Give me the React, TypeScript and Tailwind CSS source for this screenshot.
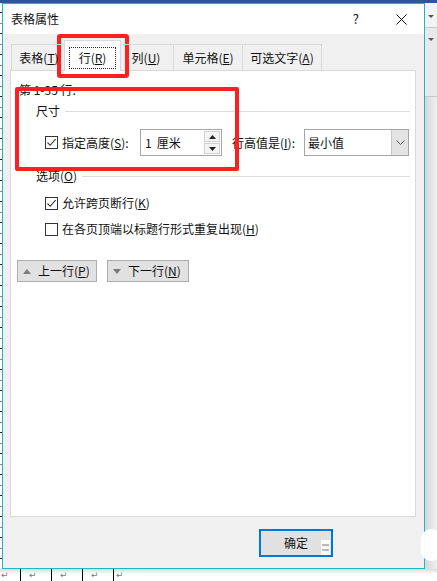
import React from "react";

function Check({ checked }: { checked: boolean }) {
  return (
    <span className="flex h-[13px] w-[13px] shrink-0 items-center justify-center border border-[#333333] bg-white">
      {checked && (
        <svg width="11" height="11" viewBox="0 0 11 11">
          <polyline points="1.5,5.5 4.2,8.3 9.6,2.2" fill="none" stroke="#333333" strokeWidth="1.1" />
        </svg>
      )}
    </span>
  );
}

function Tri({ up }: { up: boolean }) {
  return (
    <svg width="8" height="5" viewBox="0 0 8 5" className="shrink-0">
      {up ? <polygon points="0,5 8,5 4,0" fill="#7a7a7a" /> : <polygon points="0,0 8,0 4,5" fill="#7a7a7a" />}
    </svg>
  );
}

export default function App() {
  return (
    <div className="relative flex h-[581px] w-[437px] flex-col overflow-hidden bg-white font-['Noto_Sans_CJK_SC',sans-serif] text-[12px] leading-[16px] text-[#111111]">
      {/* top ribbon band */}
      <div className="h-[3px] w-full shrink-0 bg-[#2b579a]" />

      <div className="flex h-[566px] shrink-0">
        {/* left doc strip */}
        <div className="w-[2px] shrink-0 bg-[repeating-linear-gradient(to_bottom,#ffffff_0px,#ffffff_9px,#222222_9px,#222222_10px,#ffffff_10px,#ffffff_20px,#888888_20px,#888888_21px)]" />

        {/* dialog */}
        <div className="flex w-[423px] shrink-0 flex-col border border-[#1fb5c7] bg-[#f0f0f0]">
          {/* title bar */}
          <div className="flex h-[30px] shrink-0 items-center bg-white">
            <span className="ml-[8px]">表格属性</span>
            <span className="ml-auto text-[13px]">?</span>
            <svg width="11" height="11" viewBox="0 0 11 11" className="ml-[37px] mr-[17px]">
              <path d="M0.5 0.5 L10.5 10.5 M10.5 0.5 L0.5 10.5" stroke="#111" strokeWidth="1" />
            </svg>
          </div>

          {/* body */}
          <div className="flex flex-1 flex-col pt-[10px]">
            {/* tabs */}
            <div className="relative z-10 ml-[8px] flex h-[26px] items-end">
              <div className="flex h-[26px] w-[55px] items-center justify-center border-l border-t border-[#d9d9d9]">
                表格(<u>T</u>)
              </div>
              <div className="relative z-10 -mx-[2px] mb-[-1px] flex h-[31px] w-[57px] justify-center border-l border-r border-t border-[#d9d9d9] bg-white">
                <span className="mt-[6px] flex h-[22px] w-[47px] items-center justify-center border border-dotted border-[#222]">
                  行(<u>R</u>)
                </span>
              </div>
              <div className="flex h-[26px] w-[54px] items-center justify-center border-t border-[#d9d9d9]">
                列(<u>U</u>)
              </div>
              <div className="flex h-[26px] w-[69px] items-center justify-center border-l border-t border-[#d9d9d9]">
                单元格(<u>E</u>)
              </div>
              <div className="flex h-[26px] w-[80px] items-center justify-center border-l border-r border-t border-[#d9d9d9]">
                可选文字(<u>A</u>)
              </div>
            </div>

            {/* panel */}
            <div className="ml-[7px] flex h-[447px] w-[406px] shrink-0 flex-col border border-[#d9d9d9] bg-white">
              <div className="ml-[8px] mt-[11px]">第 1-35 行:</div>

              <div className="mt-[5px] flex items-center pl-[25px] pr-[5px]">
                <span>尺寸</span>
                <div className="ml-[5px] h-px flex-1 bg-[#dcdcdc]" />
              </div>

              <div className="mt-[10px] flex h-[27px] items-center pl-[34px]">
                <Check checked />
                <span className="ml-[4px] w-[78px] shrink-0">
                  指定高度(<u>S</u>):
                </span>
                <div className="flex h-[27px] w-[82px] shrink-0 items-center border border-[#a6a6a6] bg-white">
                  <span className="flex flex-1 pl-[4px]">
                    <span>1</span>
                    <span className="ml-[5px]">厘米</span>
                  </span>
                  <div className="mr-[1px] flex w-[16px] flex-col gap-[1px]">
                    <div className="flex h-[11px] items-center justify-center border border-[#cfcfcf] bg-[#f4f4f4]">
                      <svg width="7" height="4" viewBox="0 0 7 4"><polygon points="0,4 7,4 3.5,0" fill="#222" /></svg>
                    </div>
                    <div className="flex h-[11px] items-center justify-center border border-[#cfcfcf] bg-[#f4f4f4]">
                      <svg width="7" height="4" viewBox="0 0 7 4"><polygon points="0,0 7,0 3.5,4" fill="#222" /></svg>
                    </div>
                  </div>
                </div>
                <span className="ml-[10px] w-[72px] shrink-0">
                  行高值是(<u>I</u>):
                </span>
                <div className="flex h-[27px] w-[105px] shrink-0 items-stretch border border-[#a6a6a6] bg-white">
                  <span className="flex flex-1 items-center pl-[3px]">最小值</span>
                  <div className="flex w-[17px] items-center justify-center border-l border-[#c8c8c8] bg-[#e3e3e3]">
                    <svg width="9" height="5" viewBox="0 0 9 5"><polyline points="0.5,0.5 4.5,4.5 8.5,0.5" fill="none" stroke="#555" strokeWidth="1" /></svg>
                  </div>
                </div>
              </div>

              <div className="mt-[12px] flex items-center pl-[25px] pr-[5px]">
                <span>
                  选项(<u>O</u>)
                </span>
                <div className="ml-[5px] h-px flex-1 bg-[#dcdcdc]" />
              </div>

              <div className="mt-[11px] flex h-[16px] items-center pl-[34px]">
                <Check checked />
                <span className="ml-[4px]">
                  允许跨页断行(<u>K</u>)
                </span>
              </div>

              <div className="mt-[10px] flex h-[16px] items-center pl-[34px]">
                <Check checked={false} />
                <span className="ml-[4px]">
                  在各页顶端以标题行形式重复出现(<u>H</u>)
                </span>
              </div>

              <div className="mt-[23px] flex gap-[10px] pl-[6px]">
                <div className="flex h-[22px] w-[80px] items-center border border-[#adadad] bg-[#e1e1e1]">
                  <span className="ml-[5px] flex"><Tri up /></span>
                  <span className="ml-[7px]">
                    上一行(<u>P</u>)
                  </span>
                </div>
                <div className="flex h-[22px] w-[82px] items-center border border-[#adadad] bg-[#e1e1e1]">
                  <span className="ml-[5px] flex"><Tri up={false} /></span>
                  <span className="ml-[7px]">
                    下一行(<u>N</u>)
                  </span>
                </div>
              </div>
            </div>

            {/* OK */}
            <div className="ml-[256px] mt-[12px] flex h-[28px] w-[74px] items-center justify-center border-2 border-[#0078d7] bg-[#e1e1e1]">
              确定
            </div>
          </div>
        </div>

        {/* right strip */}
        <div className="flex flex-1 flex-col">
          <div className="flex h-[25px] items-center justify-center border-b border-[#c8c8c8] bg-[#f3f3f3] pt-[3px]">
            <svg width="6" height="3" viewBox="0 0 6 3"><polygon points="0,0 6,0 3,3" fill="#555" /></svg>
          </div>
          <div className="flex h-[69px] justify-center border-b border-[#c8c8c8] bg-[#e9e9e9] pt-[10px]">
            <svg width="6" height="3" viewBox="0 0 6 3"><polygon points="0,0 6,0 3,3" fill="#555" /></svg>
          </div>
          <div className="flex-1 bg-gradient-to-r from-[#d6d6d6] to-[#f1f1f1]" />
        </div>
      </div>

      {/* bottom doc strip */}
      <div className="flex h-[12px] shrink-0 bg-[linear-gradient(to_bottom,#dadada,#ffffff_5px)] text-[9px] leading-[12px] text-[#777777] font-['DejaVu_Sans',sans-serif]">
        <div className="w-[21px] border-r border-black pl-[1px]">↵</div>
        <div className="w-[31px] border-r border-black pl-[8px]">↵</div>
        <div className="w-[31px] border-r border-black pl-[8px]">↵</div>
        <div className="w-[31px] border-r border-black pl-[8px]">↵</div>
        <div className="flex-1 pl-[2px]">↵</div>
      </div>

      {/* red highlight boxes */}
      <div className="absolute left-[57px] top-[34px] h-[44px] w-[72px] rounded-[3px] border-[4px] border-[#fe2020]" />
      <div className="absolute left-[15px] top-[87px] h-[84px] w-[224px] rounded-[2px] border-[4px] border-[#fe2020]" />

      {/* watermark fragments */}
      <div className="absolute left-[321px] top-[540px] flex h-[15px] w-[9px] flex-col justify-center gap-[3px] bg-white/90 px-[1px]">
        <div className="h-[2px] bg-[#bbbbbb]" />
        <div className="h-[2px] bg-[#bbbbbb]" />
      </div>
      <div className="absolute left-[421px] top-[529px] h-[32px] w-[20px] rounded-full bg-white/95" />
    </div>
  );
}
